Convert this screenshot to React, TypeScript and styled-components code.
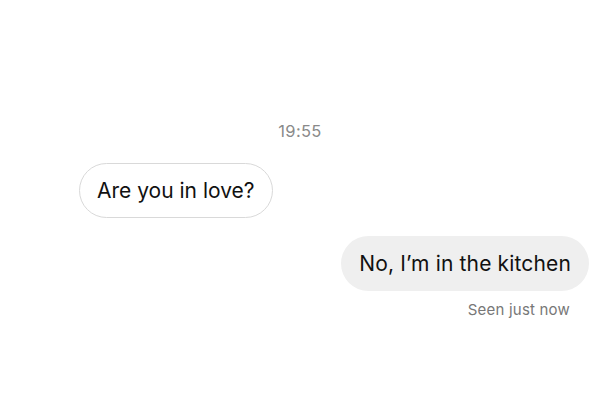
import styled, { createGlobalStyle } from 'styled-components'

const GlobalStyle = createGlobalStyle`
  html, body {
    margin: 0;
    padding: 0;
    background: #ffffff;
  }
  body {
    font-family: Inter, "Liberation Sans", sans-serif;
    -webkit-font-smoothing: antialiased;
  }
`

const Thread = styled.div`
  width: 600px;
  height: 400px;
  box-sizing: border-box;
  padding: 120px 11px 0 79px;
  display: flex;
  flex-direction: column;
  background: #fff;
`

const Timestamp = styled.div`
  align-self: center;
  margin-left: -68px;
  font-size: 16.5px;
  line-height: 22px;
  color: #8a8a8a;
  letter-spacing: 0.3px;
`

const Bubble = styled.div<{ $mine?: boolean }>`
  align-self: ${(p) => (p.$mine ? 'flex-end' : 'flex-start')};
  box-sizing: border-box;
  height: 55px;
  display: flex;
  align-items: center;
  padding: 0 ${(p) => (p.$mine ? '18px' : '17px')};
  border-radius: 28px;
  font-size: 21px;
  letter-spacing: ${(p) => (p.$mine ? '0.15px' : '0')};
  color: #111;
  background: ${(p) => (p.$mine ? '#efefef' : '#fff')};
  border: ${(p) => (p.$mine ? 'none' : '1.5px solid #d9d9d9')};
`

const Seen = styled.div`
  align-self: flex-end;
  margin: 9px 19px 0 0;
  font-size: 15px;
  color: #777;
  letter-spacing: 0.2px;
`

export default function App() {
  return (
    <>
      <GlobalStyle />
      <Thread>
        <Timestamp>19:55</Timestamp>
        <Bubble style={{ marginTop: 21 }}>Are you in love?</Bubble>
        <Bubble $mine style={{ marginTop: 18 }}>
          No, I’m in the kitchen
        </Bubble>
        <Seen>Seen just now</Seen>
      </Thread>
    </>
  )
}
